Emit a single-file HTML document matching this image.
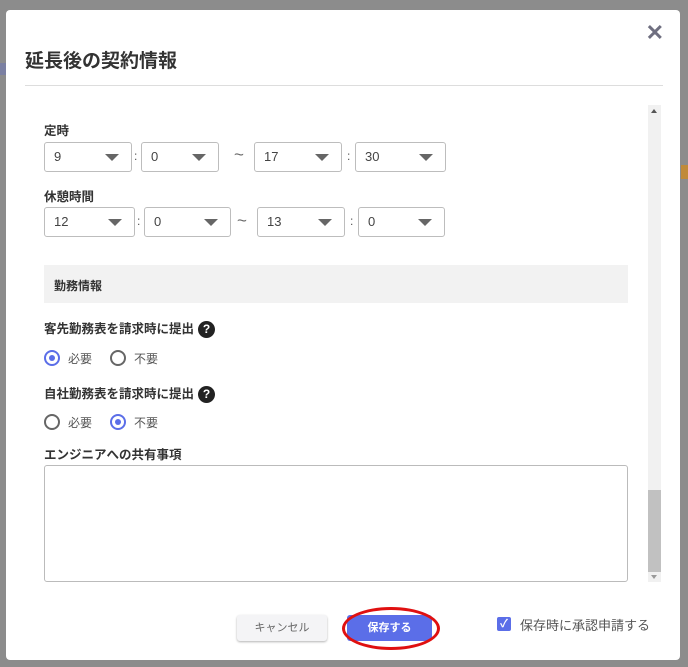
<!DOCTYPE html>
<html><head><meta charset="utf-8"><style>
body{margin:0;width:688px;height:667px;background:#8c8c8c;position:relative;overflow:hidden;font-family:"Liberation Sans","Noto Sans CJK JP",sans-serif;color:#333}
.m{position:absolute;left:6px;top:10px;width:674px;height:650px;background:#fff;border-radius:4px}
.a{position:absolute}
.t{left:19px;top:36px;font-size:19px;font-weight:bold;color:#333}
.x{right:16px;top:10px;font-size:22px;color:#6f6f80;font-weight:bold}
.sel{position:absolute;height:30px;border:1px solid #bdbdbd;border-radius:3px;box-sizing:border-box;font-size:13px;line-height:28px;padding-left:9px;color:#444}
.sel:after{content:"";position:absolute;right:12px;top:11px;border-left:7px solid transparent;border-right:7px solid transparent;border-top:7px solid #666}
.lb{font-size:12.5px;font-weight:bold;color:#333}
.c{font-size:12px;color:#555}
.tl{font-size:17px;color:#666}
.r{position:absolute;width:16px;height:16px;border:2px solid #666;border-radius:50%;box-sizing:border-box}
.r.on{border-color:#5b6ee8}
.r.on:after{content:"";position:absolute;left:3px;top:3px;width:6px;height:6px;border-radius:50%;background:#5b6ee8}
.q{display:inline-block;width:17px;height:17px;border-radius:50%;background:#222;color:#fff;font-size:12px;text-align:center;line-height:17px;font-weight:bold;vertical-align:middle;margin-left:4px}
</style></head><body>
<div class="a" style="left:0;top:63px;width:6px;height:12px;background:#6a74b8;opacity:.5"></div>
<div class="a" style="left:681px;top:165px;width:7px;height:14px;background:#c08a3a"></div>
<div class="m">
<div class="a t">延長後の契約情報</div>
<div class="a x">✕</div>
<div class="a" style="left:19px;top:75px;width:638px;height:1px;background:#ddd"></div>
<div class="a" style="left:642px;top:95px;width:13px;height:477px;background:#f1f1f1"></div>
<div class="a" style="left:642px;top:480px;width:13px;height:82px;background:#c1c1c1"></div>
<div class="a" style="left:645px;top:99px;border-left:3px solid transparent;border-right:3px solid transparent;border-bottom:4px solid #555"></div>
<div class="a" style="left:645px;top:565px;border-left:3px solid transparent;border-right:3px solid transparent;border-top:4px solid #999"></div>
</div>
<div class="a lb" style="left:44px;top:120px">定時</div>
<div class="sel" style="left:44px;top:142px;width:88px">9</div>
<div class="a c" style="left:134px;top:149px">:</div>
<div class="sel" style="left:141px;top:142px;width:78px">0</div>
<div class="a tl" style="left:234px;top:145px">~</div>
<div class="sel" style="left:254px;top:142px;width:88px">17</div>
<div class="a c" style="left:347px;top:149px">:</div>
<div class="sel" style="left:355px;top:142px;width:91px">30</div>
<div class="a lb" style="left:44px;top:186px">休憩時間</div>
<div class="sel" style="left:44px;top:207px;width:91px">12</div>
<div class="a c" style="left:137px;top:214px">:</div>
<div class="sel" style="left:144px;top:207px;width:87px">0</div>
<div class="a tl" style="left:237px;top:211px">~</div>
<div class="sel" style="left:257px;top:207px;width:88px">13</div>
<div class="a c" style="left:350px;top:214px">:</div>
<div class="sel" style="left:358px;top:207px;width:87px">0</div>
<div class="a" style="left:44px;top:265px;width:584px;height:38px;background:#f2f2f2"></div>
<div class="a lb" style="left:54px;top:277px;font-size:12px">勤務情報</div>
<div class="a lb" style="left:44px;top:318px">客先勤務表を請求時に提出<span class="q">?</span></div>
<div class="r on" style="left:44px;top:350px"></div><div class="a c" style="left:68px;top:350px">必要</div>
<div class="r" style="left:110px;top:350px"></div><div class="a c" style="left:134px;top:350px">不要</div>
<div class="a lb" style="left:44px;top:383px">自社勤務表を請求時に提出<span class="q">?</span></div>
<div class="r" style="left:44px;top:414px"></div><div class="a c" style="left:68px;top:414px">必要</div>
<div class="r on" style="left:110px;top:414px"></div><div class="a c" style="left:134px;top:414px">不要</div>
<div class="a lb" style="left:44px;top:444px">エンジニアへの共有事項</div>
<div class="a" style="left:44px;top:465px;width:584px;height:117px;border:1px solid #bbb;border-radius:3px;box-sizing:border-box"></div>
<div class="a" style="left:237px;top:615px;width:90px;height:26px;background:#f4f4f6;border-radius:3px;box-shadow:0 1px 2px rgba(0,0,0,.3);font-size:11px;color:#666;text-align:center;line-height:26px">キャンセル</div>
<div class="a" style="left:347px;top:615px;width:85px;height:26px;background:#5b6ee8;border-radius:3px;font-size:11px;color:#fff;font-weight:bold;text-align:center;line-height:26px">保存する</div>
<div class="a" style="left:342px;top:607px;width:92px;height:37px;border:3px solid #e01010;border-radius:50%"></div>
<div class="a" style="left:497px;top:617px;width:14px;height:14px;background:#5b6ee8;border-radius:2px;color:#fff;font-size:11px;text-align:center;line-height:14px;font-weight:bold">✓</div>
<div class="a" style="left:520px;top:615px;font-size:13px;color:#555">保存時に承認申請する</div>
</body></html>
